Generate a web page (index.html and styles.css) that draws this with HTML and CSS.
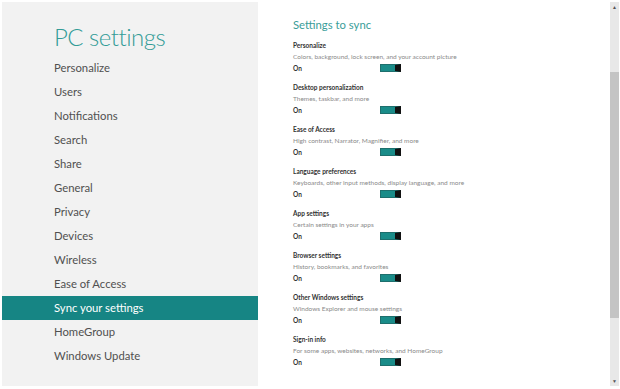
FILE: index.html
```html
<!DOCTYPE html>
<html lang="en">
<head>
    <meta charset="UTF-8">
    <title>PC settings</title>
    <link rel="stylesheet" href="styles.css">
</head>
<body>
    <div class="screen">
        <nav class="sidebar">
            <h1 class="title">PC settings</h1>
            <ul class="menu">
                <li>Personalize</li>
                <li>Users</li>
                <li>Notifications</li>
                <li>Search</li>
                <li>Share</li>
                <li>General</li>
                <li>Privacy</li>
                <li>Devices</li>
                <li>Wireless</li>
                <li>Ease of Access</li>
                <li class="selected">Sync your settings</li>
                <li>HomeGroup</li>
                <li>Windows Update</li>
            </ul>
        </nav>

        <main class="content">
            <h2 class="heading">Settings to sync</h2>

            <div class="setting">
                <div class="setting-name">Personalize</div>
                <div class="setting-desc">Colors, background, lock screen, and your account picture</div>
                <div class="setting-row"><span class="state">On</span><span class="toggle"></span></div>
            </div>
            <div class="setting">
                <div class="setting-name">Desktop personalization</div>
                <div class="setting-desc">Themes, taskbar, and more</div>
                <div class="setting-row"><span class="state">On</span><span class="toggle"></span></div>
            </div>
            <div class="setting">
                <div class="setting-name">Ease of Access</div>
                <div class="setting-desc">High contrast, Narrator, Magnifier, and more</div>
                <div class="setting-row"><span class="state">On</span><span class="toggle"></span></div>
            </div>
            <div class="setting">
                <div class="setting-name">Language preferences</div>
                <div class="setting-desc">Keyboards, other input methods, display language, and more</div>
                <div class="setting-row"><span class="state">On</span><span class="toggle"></span></div>
            </div>
            <div class="setting">
                <div class="setting-name">App settings</div>
                <div class="setting-desc">Certain settings in your apps</div>
                <div class="setting-row"><span class="state">On</span><span class="toggle"></span></div>
            </div>
            <div class="setting">
                <div class="setting-name">Browser settings</div>
                <div class="setting-desc">History, bookmarks, and favorites</div>
                <div class="setting-row"><span class="state">On</span><span class="toggle"></span></div>
            </div>
            <div class="setting">
                <div class="setting-name">Other Windows settings</div>
                <div class="setting-desc">Windows Explorer and mouse settings</div>
                <div class="setting-row"><span class="state">On</span><span class="toggle"></span></div>
            </div>
            <div class="setting">
                <div class="setting-name">Sign-in info</div>
                <div class="setting-desc">For some apps, websites, networks, and HomeGroup</div>
                <div class="setting-row"><span class="state">On</span><span class="toggle"></span></div>
            </div>
        </main>

        <div class="scrollbar">
            <span class="arrow">&#9650;</span>
            <div class="track">
                <div class="thumb"></div>
            </div>
            <span class="arrow">&#9660;</span>
        </div>
    </div>
</body>
</html>
```

FILE: styles.css
```css
body, html {
    margin: 0;
    padding: 0;
    background: #fff;
    font-family: Lato, "Open Sans", sans-serif;
}
.screen {
    display: flex;
    width: 620px;
    height: 389px;
}
.sidebar {
    width: 256px;
    height: 384px;
    margin: 2px 0 0 2px;
    background: #f2f2f2;
}
.title {
    margin: 20px 0 4px 52px;
    font-size: 24px;
    line-height: 30px;
    font-weight: 300;
    letter-spacing: -0.5px;
    color: #339c97;
}
.menu {
    list-style: none;
    margin: 0;
    padding: 0;
}
.menu li {
    height: 24px;
    line-height: 24px;
    padding-left: 52px;
    font-size: 11.3px;
    color: #505050;
}
.menu li.selected {
    background: #168584;
    color: #fff;
}
.content {
    flex: 1;
    padding: 16px 0 0 35px;
}
.heading {
    margin: 0 0 6px;
    font-size: 11.3px;
    line-height: 18px;
    font-weight: 400;
    color: #3a9d99;
}
.setting {
    margin-bottom: 8px;
}
.setting-name {
    font-size: 6.5px;
    line-height: 11px;
    font-weight: 700;
    color: #333;
}
.setting-desc {
    font-size: 6.5px;
    line-height: 11px;
    color: #8a8a8a;
}
.setting-row {
    display: flex;
    align-items: center;
    height: 12px;
}
.state {
    width: 87px;
    font-size: 6.5px;
    font-weight: 700;
    color: #333;
}
.toggle {
    width: 21px;
    height: 8px;
    box-sizing: border-box;
    border: 1px solid #1e6f6d;
    border-right: 6px solid #111;
    background: #1a8c89;
}
.scrollbar {
    display: flex;
    flex-direction: column;
    align-items: center;
    width: 9px;
    height: 384px;
    margin: 2px 1px 0 0;
    background: #e8e8e8;
}
.arrow {
    height: 10px;
    font-size: 5px;
    line-height: 10px;
    color: #555;
}
.track {
    flex: 1;
    width: 100%;
}
.thumb {
    width: 100%;
    height: 246px;
    margin-top: 60px;
    background: #c4c4c4;
}
```
